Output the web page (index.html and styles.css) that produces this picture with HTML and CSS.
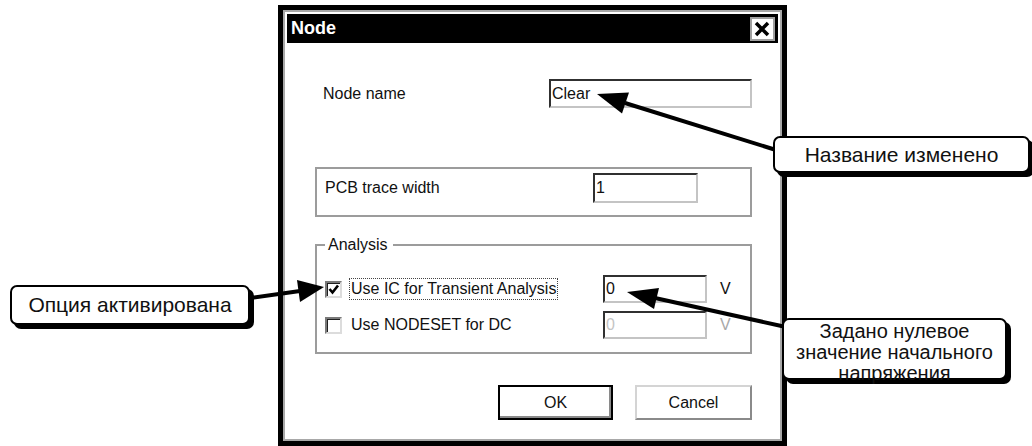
FILE: index.html
```html
<!DOCTYPE html>
<html lang="ru">
<head>
    <meta charset="UTF-8">
    <meta name="viewport" content="width=device-width, initial-scale=1.0">
    <title>Node</title>
    <link rel="stylesheet" href="styles.css">
</head>
<body>
    <div class="window">
        <div class="frame">
            <div class="titlebar">
                <span class="title">Node</span>
                <span class="close">
                    <svg width="21" height="20" viewBox="0 0 21 20">
                        <path d="M4 4 L16 16 M16 4 L4 16" stroke="#000" stroke-width="3.5" fill="none"/>
                    </svg>
                </span>
            </div>

            <div class="content">
                <div class="name-row">
                    <span class="label">Node name</span>
                    <div class="field name-field">Clear</div>
                </div>

                <div class="group pcb">
                    <span class="label pcb-label">PCB trace width</span>
                    <div class="field pcb-field">1</div>
                </div>

                <fieldset class="analysis">
                    <legend>Analysis</legend>
                    <div class="check-row">
                        <div class="check-part">
                            <span class="checkbox">
                                <svg width="13" height="13" viewBox="0 0 13 13">
                                    <path d="M2.5 6 L5.5 9.5 L11 2.5" stroke="#000" stroke-width="2.6" fill="none"/>
                                </svg>
                            </span>
                            <span class="check-label focused">Use IC for Transient Analysis</span>
                        </div>
                        <div class="field volt-field">0</div>
                        <span class="unit">V</span>
                    </div>
                    <div class="check-row second">
                        <div class="check-part">
                            <span class="checkbox"></span>
                            <span class="check-label">Use NODESET for DC</span>
                        </div>
                        <div class="field volt-field disabled">0</div>
                        <span class="unit disabled">V</span>
                    </div>
                </fieldset>

                <div class="buttons">
                    <div class="button default">OK</div>
                    <div class="button cancel">Cancel</div>
                </div>
            </div>
        </div>
    </div>

    <svg class="arrows" width="1032" height="446" viewBox="0 0 1032 446">
        <line x1="776" y1="150" x2="625" y2="103" stroke="#000" stroke-width="4"/>
        <polygon points="597,94 629,92.5 622,113.5" fill="#000"/>

        <line x1="250" y1="298" x2="300" y2="291" stroke="#000" stroke-width="4"/>
        <polygon points="324,287 297,280 300,302" fill="#000"/>

        <line x1="786" y1="327" x2="655" y2="298" stroke="#000" stroke-width="4"/>
        <polygon points="627,292 659,288 654,309" fill="#000"/>
    </svg>

    <div class="callout callout-name">Название изменено</div>
    <div class="callout callout-option">Опция активирована</div>
    <div class="callout callout-zero">Задано нулевое<br>значение начального<br>напряжения</div>
</body>
</html>
```

FILE: styles.css
```css
body {
    margin: 0;
    width: 1032px;
    height: 446px;
    overflow: hidden;
    position: relative;
    background-color: #ffffff;
    font-family: 'Liberation Sans', Arial, sans-serif;
    color: #111111;
}
.window {
    margin-left: 278px;
    margin-top: 5px;
    width: 509px;
    box-sizing: border-box;
    border: 5px solid #000000;
    background-color: #ffffff;
}
.frame {
    border: 2px solid #a8a8a8;
    padding: 2px;
}
.titlebar {
    height: 29px;
    background-color: #000000;
    display: flex;
    align-items: center;
    justify-content: space-between;
    padding: 0 3px 0 4px;
}
.title {
    color: #ffffff;
    font-weight: bold;
    font-size: 18px;
}
.close {
    width: 25px;
    height: 24px;
    box-sizing: border-box;
    background-color: #ffffff;
    border: 2px solid #a0a0a0;
    display: flex;
}
.content {
    padding: 36px 26px 17px 28px;
    font-size: 16px;
}
.name-row {
    display: flex;
    align-items: center;
    height: 29px;
}
.label {
    margin-left: 8px;
}
.field {
    box-sizing: border-box;
    border-style: solid;
    border-width: 2px;
    border-color: #303030 #c4c4c4 #c4c4c4 #303030;
    padding-left: 1px;
    display: flex;
    align-items: center;
    font-size: 16px;
}
.name-field {
    margin-left: auto;
    width: 203px;
    height: 29px;
}
.group {
    border: 2px solid #9c9c9c;
    box-sizing: border-box;
}
.pcb {
    margin-top: 59px;
    height: 50px;
    display: flex;
    align-items: center;
    padding-bottom: 8px;
}
.pcb-label {
    width: 268px;
}
.pcb-field {
    width: 105px;
    height: 30px;
}
.analysis {
    margin: 19px 0 0 0;
    border: 2px solid #9c9c9c;
    padding: 0 0 13px 8px;
}
.analysis legend {
    padding: 0 5px 0 3px;
    line-height: 18px;
}
.check-row {
    display: flex;
    align-items: center;
    height: 28px;
    margin-top: 21px;
}
.check-row.second {
    margin-top: 8px;
}
.check-part {
    flex: 0 0 278px;
    display: flex;
    align-items: center;
}
.checkbox {
    width: 17px;
    height: 17px;
    box-sizing: border-box;
    border-style: solid;
    border-width: 2px;
    border-color: #7a7a7a #dcdcdc #dcdcdc #7a7a7a;
    box-shadow: inset 1px 1px 0 #202020;
    display: flex;
    align-items: center;
    justify-content: center;
}
.check-label {
    margin-left: 7px;
    padding: 1px 1px;
    border: 1px dotted transparent;
}
.check-label.focused {
    border-color: #444444;
}
.volt-field {
    width: 104px;
    height: 28px;
}
.volt-field.disabled {
    color: #c4c4c4;
}
.unit {
    margin-left: 13px;
}
.unit.disabled {
    color: #a8a8a8;
}
.buttons {
    display: flex;
    justify-content: flex-end;
    gap: 22px;
    margin-top: 31px;
}
.button {
    height: 35px;
    box-sizing: border-box;
    display: flex;
    align-items: center;
    justify-content: center;
    font-size: 16px;
}
.default {
    width: 115px;
    border: 2px solid #000000;
    box-shadow: inset -2px -2px 0 #8a8a8a;
}
.cancel {
    width: 117px;
    border-style: solid;
    border-width: 2px;
    border-color: #d4d4d4 #8a8a8a #8a8a8a #d4d4d4;
}
.arrows {
    position: absolute;
    left: 0;
    top: 0;
    pointer-events: none;
}
.callout {
    position: absolute;
    box-sizing: border-box;
    background-color: #ffffff;
    border: 2px solid #000000;
    border-radius: 7px;
    box-shadow: 4px 4px 0 #000000;
    font-size: 21px;
    color: #111111;
    text-align: center;
    display: flex;
    align-items: center;
    justify-content: center;
}
.callout-name {
    left: 773px;
    top: 136px;
    width: 257px;
    height: 37px;
}
.callout-option {
    left: 10px;
    top: 285px;
    width: 240px;
    height: 40px;
}
.callout-zero {
    left: 782px;
    top: 318px;
    width: 225px;
    height: 62px;
    display: block;
    font-size: 20px;
    line-height: 21px;
    padding-top: 1px;
}
```
